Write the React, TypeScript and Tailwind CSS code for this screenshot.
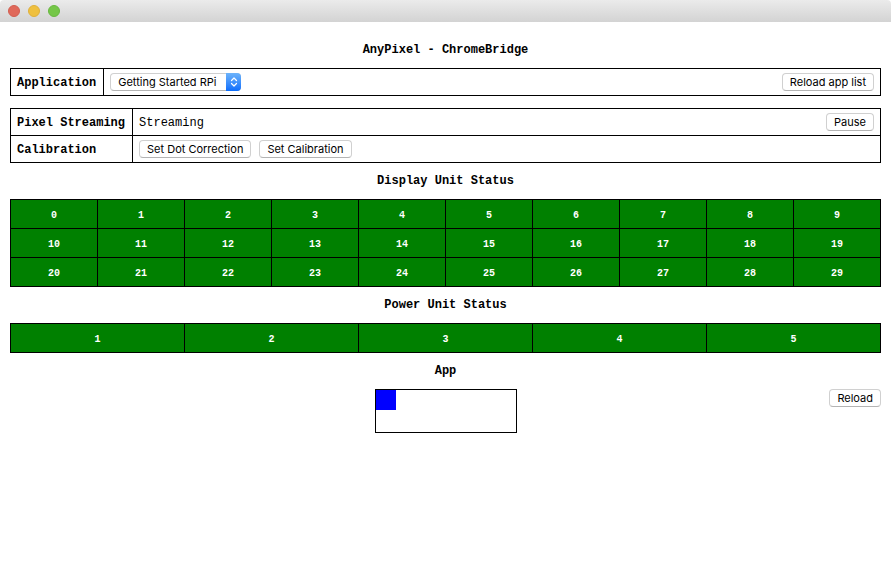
import type { ReactNode } from "react";

const displayRows = [0, 10, 20].map((start) =>
  Array.from({ length: 10 }, (_, i) => start + i),
);
const powerRows = [[1, 2, 3, 4, 5]];

function Button({ children }: { children: ReactNode }) {
  return (
    <button
      type="button"
      className="h-[18px] shrink-0 whitespace-nowrap rounded border border-[#d0d0d0] border-b-[#b4b4b4] bg-white px-[7px] font-[Inter,sans-serif] text-[11px] leading-4 text-black"
    >
      {children}
    </button>
  );
}

function Heading({ children }: { children: ReactNode }) {
  return (
    <h2 className="py-3 text-center text-xs leading-3 font-bold">{children}</h2>
  );
}

function Label({ children, htmlFor }: { children: ReactNode; htmlFor?: string }) {
  return (
    <th
      scope="row"
      className="w-px whitespace-nowrap border border-black pt-0.5 pr-[7px] pb-0 pl-1.5 text-left font-bold"
    >
      {htmlFor ? <label htmlFor={htmlFor}>{children}</label> : children}
    </th>
  );
}

function StatusTable({ rows, label }: { rows: number[][]; label: string }) {
  return (
    <table
      aria-label={label}
      className="w-full table-fixed border-collapse text-center text-[10px] leading-3 font-bold text-white"
    >
      <tbody>
        {rows.map((row) => (
          <tr key={row[0]} className="h-[29px]">
            {row.map((unit) => (
              <td key={unit} className="border border-black bg-[#008000] p-0 pt-1">
                {unit}
              </td>
            ))}
          </tr>
        ))}
      </tbody>
    </table>
  );
}

export default function App() {
  return (
    <div className="min-h-screen bg-white font-['Liberation_Mono',monospace] text-xs leading-4 text-black">
      <header className="flex h-[22px] items-center gap-2 rounded-t bg-linear-to-b from-[#ebebeb] to-[#d3d3d3] px-2">
        <span className="size-3 rounded-full border border-[#d25e50] bg-[#e0695b]" />
        <span className="size-3 rounded-full border border-[#dfb03a] bg-[#efc03f]" />
        <span className="size-3 rounded-full border border-[#68b83f] bg-[#75c748]" />
      </header>

      <main className="px-2.5 pt-2.5">
        <h1 className="pt-3 pb-3 text-center text-xs leading-3 font-bold">
          AnyPixel - ChromeBridge
        </h1>

        <table className="w-full border-collapse">
          <tbody>
            <tr className="h-[27px]">
              <Label htmlFor="application">Application</Label>
              <td className="border border-black px-1.5 py-0">
                <div className="flex items-center justify-between">
                  <span className="relative flex">
                    <select
                      id="application"
                      className="h-[18px] w-[131px] appearance-none rounded border border-[#d0d0d0] border-b-[#b4b4b4] bg-white pl-[7px] font-[Inter,sans-serif] text-[11px] leading-4 text-black"
                    >
                      <option>Getting Started RPi</option>
                    </select>
                    <span className="pointer-events-none absolute inset-y-0 right-0 flex w-[15px] items-center justify-center rounded-r bg-linear-to-b from-[#6cb3fa] to-[#0a6dfc]">
                      <svg
                        aria-hidden="true"
                        viewBox="0 0 8 10"
                        className="h-2.5 w-2 fill-none stroke-white"
                        strokeWidth="1.2"
                        strokeLinecap="round"
                        strokeLinejoin="round"
                      >
                        <path d="M1.5 3.5 4 1l2.5 2.5M1.5 6.5 4 9l2.5-2.5" />
                      </svg>
                    </span>
                  </span>
                  <Button>Reload app list</Button>
                </div>
              </td>
            </tr>
          </tbody>
        </table>

        <table className="mt-3 w-full border-collapse">
          <tbody>
            <tr className="h-[27px]">
              <Label>Pixel Streaming</Label>
              <td className="border border-black px-1.5 py-0">
                <div className="flex items-center justify-between">
                  <span className="pt-0.5">Streaming</span>
                  <Button>Pause</Button>
                </div>
              </td>
            </tr>
            <tr className="h-[27px]">
              <Label>Calibration</Label>
              <td className="border border-black px-1.5 py-0">
                <div className="flex items-center gap-2">
                  <Button>Set Dot Correction</Button>
                  <Button>Set Calibration</Button>
                </div>
              </td>
            </tr>
          </tbody>
        </table>

        <Heading>Display Unit Status</Heading>
        <StatusTable rows={displayRows} label="Display Unit Status" />

        <Heading>Power Unit Status</Heading>
        <StatusTable rows={powerRows} label="Power Unit Status" />

        <Heading>App</Heading>
        <div className="grid grid-cols-[1fr_auto_1fr] items-start">
          <div className="col-start-2 h-11 w-[142px] border border-black">
            <div className="size-5 bg-[#0000ff]" />
          </div>
          <div className="flex justify-end">
            <Button>Reload</Button>
          </div>
        </div>
      </main>
    </div>
  );
}
